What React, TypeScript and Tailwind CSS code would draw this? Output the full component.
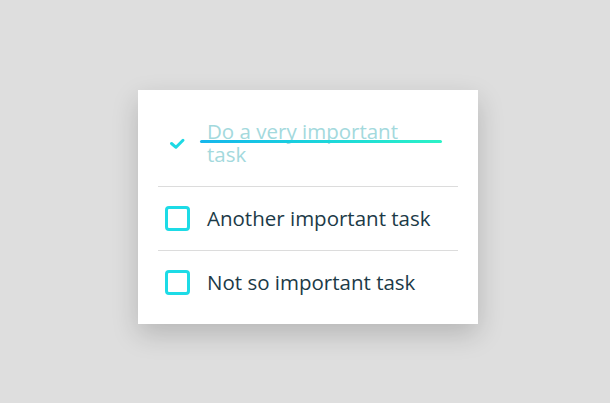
import { useState } from 'react';

interface Task {
  id: number;
  title: string;
  done: boolean;
}

const initial: Task[] = [
  { id: 1, title: 'Do a very important task', done: true },
  { id: 2, title: 'Another important task', done: false },
  { id: 3, title: 'Not so important task', done: false },
];

export default function App() {
  const [tasks, setTasks] = useState<Task[]>(initial);

  const toggle = (id: number) =>
    setTasks(tasks.map(t => (t.id === id ? { ...t, done: !t.done } : t)));

  return (
    <div
      className="min-h-screen w-full bg-[#dedede] flex items-center justify-center"
      style={{ fontFamily: '"Open Sans", "Noto Sans", sans-serif' }}
    >
      <div className="w-[340px] bg-white px-5 py-[10px] shadow-[0_10px_25px_rgba(0,0,0,0.18)] mt-[11px] ml-[6px]">
        {tasks.map((t, i) => (
          <div
            key={t.id}
            onClick={() => toggle(t.id)}
            className={`flex items-center cursor-pointer ${t.done ? 'py-5' : 'py-[19px]'} ${i > 0 ? 'border-t border-[#dcdcdc]' : ''}`}
          >
            <div className="w-[49px] shrink-0 pl-[7px]">
              {t.done ? (
                <svg width="25" height="25" viewBox="0 0 25 25">
                  <path d="M6.5 12.5l4.5 3.8 7-7" fill="none" stroke="#1dd9e4" strokeWidth="3" strokeLinecap="round" strokeLinejoin="round" />
                </svg>
              ) : (
                <div className="w-[25px] h-[25px] rounded-[4px] border-[3px] border-[#1ddbe6]" />
              )}
            </div>
            <div className={`relative text-[20.5px] leading-[23px] ${t.done ? 'w-[215px]' : 'w-[240px]'}`}>
              <span className={t.done ? 'text-[#a3d9dd]' : 'text-[#1c3a47]'}>{t.title}</span>
              {t.done && (
                <div className="absolute left-[-7px] w-[242px] top-[20px] h-[3px] rounded-full bg-gradient-to-r from-[#16b6ec] to-[#2cf2c6]" />
              )}
            </div>
          </div>
        ))}
      </div>
    </div>
  );
}
